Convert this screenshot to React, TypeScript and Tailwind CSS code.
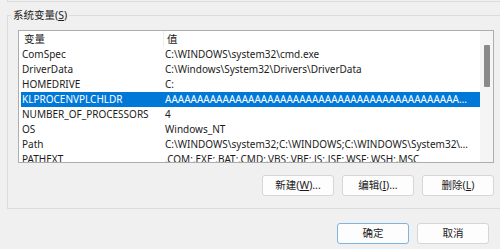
import React from "react";

const rows: [string, string][] = [
    ["ComSpec", "C:\\WINDOWS\\system32\\cmd.exe"],
    ["DriverData", "C:\\Windows\\System32\\Drivers\\DriverData"],
    ["HOMEDRIVE", "C:"],
    ["KLPROCENVPLCHLDR", "A".repeat(80)],
    ["NUMBER_OF_PROCESSORS", "4"],
    ["OS", "Windows_NT"],
    ["Path", "C:\\WINDOWS\\system32;C:\\WINDOWS;C:\\WINDOWS\\System32\\Wbem;C:\\WINDOWS\\System32\\WindowsPowerShell"],
    ["PATHEXT", ".COM;.EXE;.BAT;.CMD;.VBS;.VBE;.JS;.JSE;.WSF;.WSH;.MSC"],
];

const font = { fontFamily: "'Noto Sans', 'Noto Sans CJK SC', sans-serif" };

const Btn: React.FC<{ children: React.ReactNode; primary?: boolean }> = ({ children, primary }) => (
    <button
        className={`w-[72px] h-[21px] flex items-center justify-center rounded-[3px] bg-[#fdfdfd] text-[10.5px] text-[#1b1b1b] border ${primary ? "border-[#7fb3e0]" : "border-[#d6d6d6]"}`}
    >
        {children}
    </button>
);

export default function App() {
    const selected = 3;
    return (
        <div className="w-[500px] h-[249px] bg-[#f0f0f0] overflow-hidden text-[#1b1b1b]" style={font}>
            {/* bottom edge of the user variables box */}
            <div className="ml-[7px] h-[2px] border-l border-b border-[#dcdcdc]" />

            {/* system variables group */}
            <div className="relative ml-[7px] mt-[13px] w-[520px] h-[194px] border border-[#dcdcdc] pl-[10px] pt-[14px]">
                <div className="absolute -top-[9px] left-[3px] px-[2px] bg-[#f0f0f0] text-[10.5px] leading-[16px]">
                    系统变量(<span className="underline">S</span>)
                </div>

                <div className="w-[476px] h-[133px] border border-[#adadad] bg-white flex overflow-hidden">
                    <div className="flex-1 flex flex-col text-[10px] leading-[15px]">
                        <div className="h-[16px] flex items-center shrink-0 text-[10.5px]">
                            <div className="w-[143px] pl-[3px] ml-[2px] border-r border-[#eeeeee] h-full flex items-center">变量</div>
                            <div className="pl-[3px]">值</div>
                        </div>
                        {rows.map(([name, value], i) => (
                            <div
                                key={name}
                                className={`h-[15px] shrink-0 flex items-center ml-[2px] ${i === selected ? "bg-[#0078d7] text-white" : ""}`}
                            >
                                <div className="w-[143px] pl-[1px] truncate">{name}</div>
                                <div className="w-[306px] pl-[1px] truncate">{value}</div>
                            </div>
                        ))}
                    </div>
                    <div className="w-[13px] bg-[#f5f5f5] flex justify-center pt-[14px] shrink-0">
                        <div className="w-[6px] h-[42px] bg-[#8a8a8a] rounded-[1px]" />
                    </div>
                </div>

                <div className="w-[476px] flex justify-end gap-[8px] mt-[12px]">
                    <Btn>新建(<span className="underline">W</span>)...</Btn>
                    <Btn>编辑(<span className="underline">I</span>)...</Btn>
                    <Btn>删除(<span className="underline">L</span>)</Btn>
                </div>
            </div>

            <div className="w-[489px] flex justify-end gap-[8px] mt-[14px]">
                <Btn primary>确定</Btn>
                <Btn>取消</Btn>
            </div>
        </div>
    );
}
